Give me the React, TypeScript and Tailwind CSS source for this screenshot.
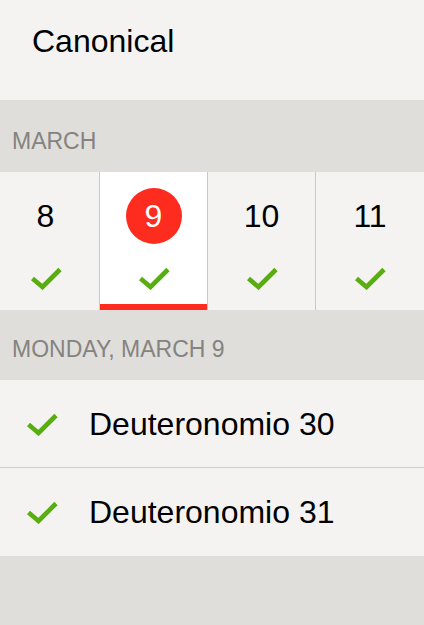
const font = { fontFamily: '"Liberation Sans", Arial, sans-serif' }

const days = [
  { day: 8, done: true },
  { day: 9, done: true, selected: true },
  { day: 10, done: true },
  { day: 11, done: true },
]

const readings = ['Deuteronomio 30', 'Deuteronomio 31']

function Check({ className = '' }: { className?: string }) {
  return (
    <svg viewBox="0 0 32 24" className={className} fill="none">
      <path
        d="M2.5 12.5 L12.5 21 L30 3.5"
        stroke="#58ad10"
        strokeWidth="4.6"
        strokeLinecap="butt"
        strokeLinejoin="miter"
      />
    </svg>
  )
}

export default function App() {
  return (
    <div className="w-[424px] h-[625px] overflow-hidden bg-[#dfdedb] text-black" style={font}>
      {/* Title */}
      <div className="h-[100px] bg-[#f4f3f2] pl-[32px] pt-[23px]">
        <h1 className="text-[32px] leading-[36px]">Canonical</h1>
      </div>

      {/* Month header */}
      <div className="h-[72px] pl-[12px] pt-[28px]">
        <span className="text-[23px] leading-[26px] text-[#858380]">MARCH</span>
      </div>

      {/* Day strip */}
      <div className="h-[138px] overflow-hidden bg-[#f4f3f2]">
        <div className="flex -ml-[8px]">
          {days.map((d, i) => (
            <div
              key={d.day}
              className={
                'relative flex h-[138px] w-[108px] shrink-0 flex-col items-center pt-[16px] ' +
                (i < days.length - 1 ? 'border-r border-[#cac9c7] ' : '') +
                (d.selected ? 'bg-white' : 'bg-[#f4f3f2]')
              }
            >
              <div
                className={
                  'flex h-[56px] w-[56px] items-center justify-center rounded-full text-[32px] leading-none ' +
                  (d.selected ? 'bg-[#fe2c1f] text-white' : '')
                }
              >
                {d.day}
              </div>
              {d.done && <Check className="mt-[22px] h-[24px] w-[32px]" />}
              {d.selected && <div className="absolute bottom-0 left-0 right-0 h-[6px] bg-[#fe2c1f]" />}
            </div>
          ))}
        </div>
      </div>

      {/* Day header */}
      <div className="h-[70px] pl-[12px] pt-[26px]">
        <span className="text-[23px] leading-[26px] text-[#858380]">MONDAY, MARCH 9</span>
      </div>

      {/* Readings */}
      <ul className="bg-[#f4f3f2]">
        {readings.map((r, i) => (
          <li
            key={r}
            className={
              'flex items-center pl-[26px] ' +
              (i === 0 ? 'h-[88px] border-b border-[#cfcecc]' : 'h-[88px]')
            }
          >
            <Check className="h-[24px] w-[32px]" />
            <span className="ml-[31px] text-[32px] leading-[36px]">{r}</span>
          </li>
        ))}
      </ul>
    </div>
  )
}
